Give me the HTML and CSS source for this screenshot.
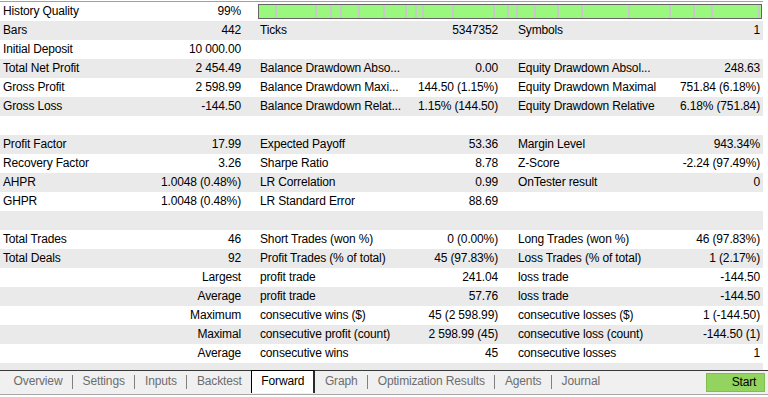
FILE: index.html
```html
<!DOCTYPE html>
<html>
<head>
<meta charset="utf-8">
<link rel="stylesheet" href="styles.css">
</head>
<body>
<div class="report">
  <div class="row">
    <div class="lbl">History Quality</div><div class="val v1">99%</div>
    <div class="quality">
      <div class="qbar">
        <i style="left:16px"></i><i style="left:56px"></i><i style="left:71px"></i><i style="left:81px"></i><i style="left:99px"></i><i style="left:124px"></i><i style="left:146px"></i><i style="left:156px"></i><i style="left:163px"></i><i style="left:193px"></i><i style="left:234px"></i><i style="left:248px"></i><i style="left:257px"></i><i style="left:275px"></i><i style="left:298px"></i><i style="left:322px"></i><i style="left:369px"></i><i style="left:410px"></i><i style="left:434px"></i><i style="left:452px"></i><i style="left:499px"></i>
      </div>
    </div>
  </div>
  <div class="row"><div class="lbl">Bars</div><div class="val v1">442</div><div class="lbl l2">Ticks</div><div class="val v2">5347352</div><div class="lbl l3">Symbols</div><div class="val v3">1</div></div>
  <div class="row"><div class="lbl">Initial Deposit</div><div class="val v1">10 000.00</div><div class="lbl l2"></div><div class="val v2"></div><div class="lbl l3"></div><div class="val v3"></div></div>
  <div class="row"><div class="lbl">Total Net Profit</div><div class="val v1">2 454.49</div><div class="lbl l2">Balance Drawdown Abso...</div><div class="val v2">0.00</div><div class="lbl l3">Equity Drawdown Absol...</div><div class="val v3">248.63</div></div>
  <div class="row"><div class="lbl">Gross Profit</div><div class="val v1">2 598.99</div><div class="lbl l2">Balance Drawdown Maxi...</div><div class="val v2">144.50 (1.15%)</div><div class="lbl l3">Equity Drawdown Maximal</div><div class="val v3">751.84 (6.18%)</div></div>
  <div class="row"><div class="lbl">Gross Loss</div><div class="val v1">-144.50</div><div class="lbl l2">Balance Drawdown Relat...</div><div class="val v2">1.15% (144.50)</div><div class="lbl l3">Equity Drawdown Relative</div><div class="val v3">6.18% (751.84)</div></div>
  <div class="row"></div>
  <div class="row"><div class="lbl">Profit Factor</div><div class="val v1">17.99</div><div class="lbl l2">Expected Payoff</div><div class="val v2">53.36</div><div class="lbl l3">Margin Level</div><div class="val v3">943.34%</div></div>
  <div class="row"><div class="lbl">Recovery Factor</div><div class="val v1">3.26</div><div class="lbl l2">Sharpe Ratio</div><div class="val v2">8.78</div><div class="lbl l3">Z-Score</div><div class="val v3">-2.24 (97.49%)</div></div>
  <div class="row"><div class="lbl">AHPR</div><div class="val v1">1.0048 (0.48%)</div><div class="lbl l2">LR Correlation</div><div class="val v2">0.99</div><div class="lbl l3">OnTester result</div><div class="val v3">0</div></div>
  <div class="row"><div class="lbl">GHPR</div><div class="val v1">1.0048 (0.48%)</div><div class="lbl l2">LR Standard Error</div><div class="val v2">88.69</div><div class="lbl l3"></div><div class="val v3"></div></div>
  <div class="row"></div>
  <div class="row"><div class="lbl">Total Trades</div><div class="val v1">46</div><div class="lbl l2">Short Trades (won %)</div><div class="val v2">0 (0.00%)</div><div class="lbl l3">Long Trades (won %)</div><div class="val v3">46 (97.83%)</div></div>
  <div class="row"><div class="lbl">Total Deals</div><div class="val v1">92</div><div class="lbl l2">Profit Trades (% of total)</div><div class="val v2">45 (97.83%)</div><div class="lbl l3">Loss Trades (% of total)</div><div class="val v3">1 (2.17%)</div></div>
  <div class="row"><div class="lbl"></div><div class="val v1">Largest</div><div class="lbl l2">profit trade</div><div class="val v2">241.04</div><div class="lbl l3">loss trade</div><div class="val v3">-144.50</div></div>
  <div class="row"><div class="lbl"></div><div class="val v1">Average</div><div class="lbl l2">profit trade</div><div class="val v2">57.76</div><div class="lbl l3">loss trade</div><div class="val v3">-144.50</div></div>
  <div class="row"><div class="lbl"></div><div class="val v1">Maximum</div><div class="lbl l2">consecutive wins ($)</div><div class="val v2">45 (2 598.99)</div><div class="lbl l3">consecutive losses ($)</div><div class="val v3">1 (-144.50)</div></div>
  <div class="row"><div class="lbl"></div><div class="val v1">Maximal</div><div class="lbl l2">consecutive profit (count)</div><div class="val v2">2 598.99 (45)</div><div class="lbl l3">consecutive loss (count)</div><div class="val v3">-144.50 (1)</div></div>
  <div class="row"><div class="lbl"></div><div class="val v1">Average</div><div class="lbl l2">consecutive wins</div><div class="val v2">45</div><div class="lbl l3">consecutive losses</div><div class="val v3">1</div></div>
  <div class="row partial"></div>
</div>
<div class="tabbar">
  <div class="tabs">
    <span class="tab">Overview</span><span class="sep"></span>
    <span class="tab">Settings</span><span class="sep"></span>
    <span class="tab">Inputs</span><span class="sep"></span>
    <span class="tab">Backtest</span>
    <span class="tab active">Forward</span>
    <span class="tab">Graph</span><span class="sep"></span>
    <span class="tab">Optimization Results</span><span class="sep"></span>
    <span class="tab">Agents</span><span class="sep"></span>
    <span class="tab">Journal</span>
  </div>
  <div class="start">Start</div>
</div>
</body>
</html>
```

FILE: styles.css
```css
html, body {
  margin: 0;
  padding: 0;
  background: #ffffff;
}
body {
  font-family: "Liberation Sans", Arial, sans-serif;
  font-size: 12px;
  letter-spacing: -0.15px;
  color: #000;
  width: 768px;
  height: 397px;
  overflow: hidden;
}
.report {
  border-top: 1px solid #a0a0a0;
  margin-top: 1px;
  width: 763px;
}
.row {
  display: grid;
  grid-template-columns: 150px 108px 140px 118px 140px 107px;
  height: 19px;
  line-height: 19px;
  background: #ffffff;
}
.row:nth-child(even) {
  background: #eaeaea;
}
.row.partial {
  height: 7px;
  background: #eaeaea;
}
.lbl {
  padding-left: 3px;
  white-space: nowrap;
}
.lbl.l2, .lbl.l3 {
  padding-left: 2px;
}
.val {
  text-align: right;
  white-space: nowrap;
}
.v1 { padding-right: 17px; }
.v2 { padding-right: 18px; }
.v3 { padding-right: 3px; }
.quality {
  grid-column: 3 / 7;
  padding: 2px 1px 0 0;
}
.qbar {
  position: relative;
  height: 13px;
  border: 1px solid #646464;
  background: #9af87f;
}
.qbar i {
  position: absolute;
  top: 0;
  width: 2px;
  height: 13px;
  background: #c8c8c8;
}
.tabbar {
  display: flex;
  justify-content: space-between;
  height: 23px;
  border-top: 1px solid #3a3a3a;
  border-bottom: 1px solid #a8a8a8;
  background: #f0f0f0;
}
.tabs {
  display: flex;
  align-items: flex-start;
  padding-left: 4px;
  color: #6d6d6d;
}
.tab {
  padding: 0 9.6px;
  line-height: 21px;
}
.tab.active {
  background: #ffffff;
  color: #000;
  border-left: 1px solid #000;
  border-right: 2px solid #2a2a2a;
  padding: 0 9px;
  height: 22px;
  margin-top: -1px;
  border-top: 1px solid #000;
}
.sep {
  width: 1px;
  height: 14px;
  margin-top: 4px;
  background: #808080;
}
.start {
  width: 40px;
  height: 17px;
  margin: 2px 3px 0 0;
  padding-left: 17px;
  line-height: 17px;
  text-align: center;
  background: #93d35f;
  border: 1px solid #7fbf4f;
}
```
